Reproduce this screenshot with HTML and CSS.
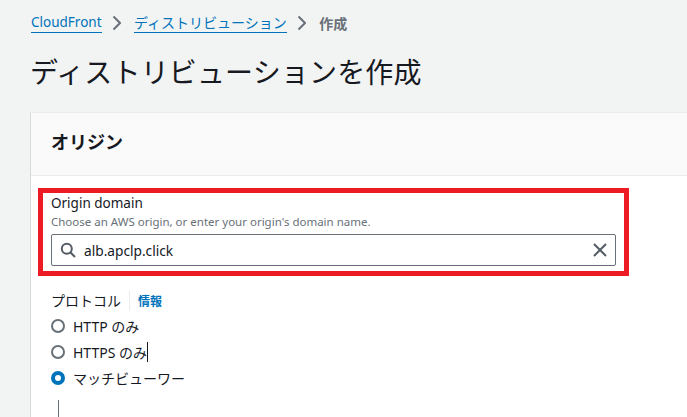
FILE: index.html
```html
<!DOCTYPE html>
<html lang="ja">
<head>
<meta charset="utf-8">
<title>ディストリビューションを作成</title>
<link rel="stylesheet" href="styles.css">
</head>
<body>
<nav class="crumbs">
  <a class="crumb latin" href="#">CloudFront</a>
  <svg class="sep" width="10" height="16" viewBox="0 0 10 16"><path d="M2.5 1.5 9 8 2.5 14.5" fill="none" stroke="#687078" stroke-width="2"/></svg>
  <a class="crumb" href="#">ディストリビューション</a>
  <svg class="sep" width="10" height="16" viewBox="0 0 10 16"><path d="M2.5 1.5 9 8 2.5 14.5" fill="none" stroke="#687078" stroke-width="2"/></svg>
  <span class="current">作成</span>
</nav>
<h1 class="title">ディストリビューションを作成</h1>
<section class="card">
  <header class="card-head"><h2 class="card-title">オリジン</h2></header>
  <div class="card-body">
    <div class="field">
      <div class="highlight"></div>
      <div class="label">Origin domain</div>
      <div class="hint">Choose an AWS origin, or enter your origin's domain name.</div>
      <div class="input">
        <svg class="search" width="16" height="16" viewBox="0 0 16 16"><circle cx="6.8" cy="6.8" r="5" fill="none" stroke="#545b64" stroke-width="2"/><path d="M10.5 10.5 15 15" stroke="#545b64" stroke-width="2" fill="none"/></svg>
        <span class="value">alb.apclp.click</span>
        <svg class="clear" width="16" height="16" viewBox="0 0 16 16"><path d="M2 2 14 14M14 2 2 14" stroke="#545b64" stroke-width="2" fill="none"/></svg>
      </div>
    </div>
    <div class="proto">
      <div class="proto-head"><span class="proto-label">プロトコル</span><a class="info" href="#">情報</a></div>
      <div class="radios">
        <div class="radio"><span class="dot"></span><span>HTTP のみ</span></div>
        <div class="radio"><span class="dot"></span><span class="caret">HTTPS のみ</span></div>
        <div class="radio"><span class="dot on"></span><span>マッチビューワー</span></div>
      </div>
      <div class="rule"></div>
    </div>
  </div>
</section>
</body>
</html>
```
FILE: styles.css
```css
html, body { margin: 0; padding: 0; height: 100%; overflow: hidden; }
body {
  background: #f2f3f3;
  color: #16191f;
  font-family: "Noto Sans", "Noto Sans CJK JP", sans-serif;
  font-size: 14px;
  padding: 13px 0 0 31px;
  box-sizing: border-box;
}
.crumbs { display: flex; align-items: center; height: 20px; font-size: 14px; }
.crumb {
  color: #0073bb;
  text-decoration: none;
  border-bottom: 1px solid #0073bb;
  line-height: 19px;
  height: 19px;
}
.latin { font-size: 13.5px; }
.sep { margin: 0 13px 0 9.5px; }
.current { color: #687078; font-size: 14px; font-weight: 700; }
.title {
  margin: 17px 0 0 -1px;
  font-size: 28px;
  font-weight: 400;
  line-height: 44px;
  letter-spacing: 0.15px;
}
.card {
  margin-top: 18px;
  margin-left: -1px;
  background: #fff;
  border-left: 1px solid #d5dbdb;
  border-top: 1px solid #eaeded;
  height: 304px;
}
.card-head {
  height: 63px;
  box-sizing: border-box;
  background: #fafafa;
  border-bottom: 1px solid #eaeded;
  padding: 0 0 6px 20px;
  display: flex;
  align-items: center;
}
.card-title { margin: 0; font-size: 18px; font-weight: 700; }
.card-body { padding: 17px 0 0 20px; }
.field { position: relative; width: 565px; }
.highlight {
  position: absolute;
  left: -13px; top: -5px; right: -13px; bottom: -10px;
  border: 5px solid #ed1c24;
  pointer-events: none;
}
.label { font-size: 13.5px; line-height: 20px; height: 20px; }
.hint { font-size: 11.5px; line-height: 16px; color: #687078; height: 16px; margin-top: 1px; }
.input {
  margin-top: 4px;
  height: 32px;
  box-sizing: border-box;
  border: 1px solid #687078;
  border-radius: 2px;
  background: #fff;
  display: flex;
  align-items: center;
  padding: 0 7px 0 8px;
}
.search { flex: none; }
.value { margin-left: 8px; font-size: 13.7px; flex: 1; }
.clear { flex: none; }
.proto { margin-top: 25px; }
.proto-head { display: flex; align-items: center; height: 20px; }
.proto-label { font-size: 14px; padding-right: 8px; border-right: 1px solid #eaeded; line-height: 20px; }
.info { color: #0073bb; text-decoration: none; font-size: 12px; font-weight: 700; margin-left: 8px; }
.radios { display: flex; flex-direction: column; gap: 5px; margin-top: 4px; }
.radio { display: flex; align-items: center; height: 21px; font-size: 14px; gap: 8px; }
.dot {
  width: 14px; height: 14px; border-radius: 50%;
  border: 2px solid #687078;
  background: #fff;
  flex: none;
  box-sizing: border-box;
}
.dot.on { border: 4.5px solid #0073bb; }
.caret { border-right: 1px solid #16191f; }
.rule { width: 1px; height: 17px; background: #687078; margin: 12px 0 0 7px; }
```
